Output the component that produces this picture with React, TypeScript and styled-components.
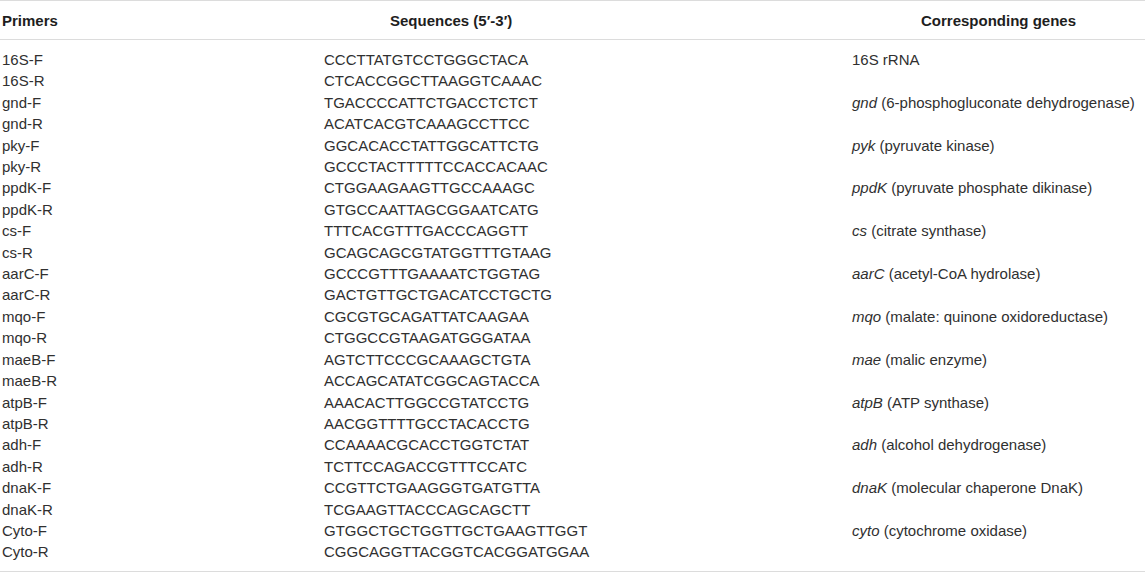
import styled, { createGlobalStyle } from "styled-components";

const GlobalStyle = createGlobalStyle`
  html, body {
    margin: 0;
    padding: 0;
    background: #fff;
  }
  body {
    font-family: "Liberation Sans", Arial, sans-serif;
    color: #303030;
  }
`;

type Primer = { name: string; seq: string };
type Pair = { f: Primer; r: Primer; gene?: string; note: string };

const pairs: Pair[] = [
  { f: { name: "16S-F", seq: "CCCTTATGTCCTGGGCTACA" }, r: { name: "16S-R", seq: "CTCACCGGCTTAAGGTCAAAC" }, note: "16S rRNA" },
  { f: { name: "gnd-F", seq: "TGACCCCATTCTGACCTCTCT" }, r: { name: "gnd-R", seq: "ACATCACGTCAAAGCCTTCC" }, gene: "gnd", note: "(6-phosphogluconate dehydrogenase)" },
  { f: { name: "pky-F", seq: "GGCACACCTATTGGCATTCTG" }, r: { name: "pky-R", seq: "GCCCTACTTTTTCCACCACAAC" }, gene: "pyk", note: "(pyruvate kinase)" },
  { f: { name: "ppdK-F", seq: "CTGGAAGAAGTTGCCAAAGC" }, r: { name: "ppdK-R", seq: "GTGCCAATTAGCGGAATCATG" }, gene: "ppdK", note: "(pyruvate phosphate dikinase)" },
  { f: { name: "cs-F", seq: "TTTCACGTTTGACCCAGGTT" }, r: { name: "cs-R", seq: "GCAGCAGCGTATGGTTTGTAAG" }, gene: "cs", note: "(citrate synthase)" },
  { f: { name: "aarC-F", seq: "GCCCGTTTGAAAATCTGGTAG" }, r: { name: "aarC-R", seq: "GACTGTTGCTGACATCCTGCTG" }, gene: "aarC", note: "(acetyl-CoA hydrolase)" },
  { f: { name: "mqo-F", seq: "CGCGTGCAGATTATCAAGAA" }, r: { name: "mqo-R", seq: "CTGGCCGTAAGATGGGATAA" }, gene: "mqo", note: "(malate: quinone oxidoreductase)" },
  { f: { name: "maeB-F", seq: "AGTCTTCCCGCAAAGCTGTA" }, r: { name: "maeB-R", seq: "ACCAGCATATCGGCAGTACCA" }, gene: "mae", note: "(malic enzyme)" },
  { f: { name: "atpB-F", seq: "AAACACTTGGCCGTATCCTG" }, r: { name: "atpB-R", seq: "AACGGTTTTGCCTACACCTG" }, gene: "atpB", note: "(ATP synthase)" },
  { f: { name: "adh-F", seq: "CCAAAACGCACCTGGTCTAT" }, r: { name: "adh-R", seq: "TCTTCCAGACCGTTTCCATC" }, gene: "adh", note: "(alcohol dehydrogenase)" },
  { f: { name: "dnaK-F", seq: "CCGTTCTGAAGGGTGATGTTA" }, r: { name: "dnaK-R", seq: "TCGAAGTTACCCAGCAGCTT" }, gene: "dnaK", note: "(molecular chaperone DnaK)" },
  { f: { name: "Cyto-F", seq: "GTGGCTGCTGGTTGCTGAAGTTGGT" }, r: { name: "Cyto-R", seq: "CGGCAGGTTACGGTCACGGATGGAA" }, gene: "cyto", note: "(cytochrome oxidase)" },
];

export default function App() {
  const rows = pairs.flatMap((p, i) => [
    { key: `${i}f`, primer: p.f, pair: p, showGene: true, first: i === 0, last: false },
    { key: `${i}r`, primer: p.r, pair: p, showGene: false, first: false, last: i === pairs.length - 1 },
  ]);

  return (
    <>
      <GlobalStyle />
      <Table>
        <colgroup>
          <col style={{ width: 322 }} />
          <col style={{ width: 528 }} />
          <col />
        </colgroup>
        <thead>
          <tr>
            <HeadCell>Primers</HeadCell>
            <HeadCell indent={68}>Sequences (5′-3′)</HeadCell>
            <HeadCell center>Corresponding genes</HeadCell>
          </tr>
        </thead>
        <tbody>
          {rows.map((r) => (
            <Row key={r.key} first={r.first} last={r.last}>
              <Cell>{r.primer.name}</Cell>
              <Cell>{r.primer.seq}</Cell>
              <Cell>
                {r.showGene && (
                  <>
                    {r.pair.gene && <Gene>{r.pair.gene}</Gene>}
                    {r.pair.gene ? " " : ""}
                    {r.pair.note}
                  </>
                )}
              </Cell>
            </Row>
          ))}
        </tbody>
      </Table>
    </>
  );
}

const Table = styled.table`
  width: 1145px;
  border-collapse: collapse;
  table-layout: fixed;
  font-size: 15px;
  border-top: 1.5px solid #dcdcdc;
  border-bottom: 1.5px solid #dcdcdc;
`;

const HeadCell = styled.th<{ center?: boolean; indent?: number }>`
  height: 38px;
  padding: 0 0 0 ${(p) => (p.indent ?? 2) + "px"};
  text-align: ${(p) => (p.center ? "center" : "left")};
  font-weight: bold;
  color: #1e1e1e;
  border-bottom: 1.5px solid #dcdcdc;
  white-space: nowrap;
`;

const Row = styled.tr<{ first: boolean; last: boolean }>`
  td {
    padding-top: ${(p) => (p.first ? "9px" : "0")};
    padding-bottom: ${(p) => (p.last ? "8px" : "0")};
  }
`;

const Cell = styled.td`
  padding-left: 2px;
  height: 21.4px;
  line-height: 21.4px;
  white-space: nowrap;
  vertical-align: top;
`;

const Gene = styled.i`
  font-style: italic;
`;
